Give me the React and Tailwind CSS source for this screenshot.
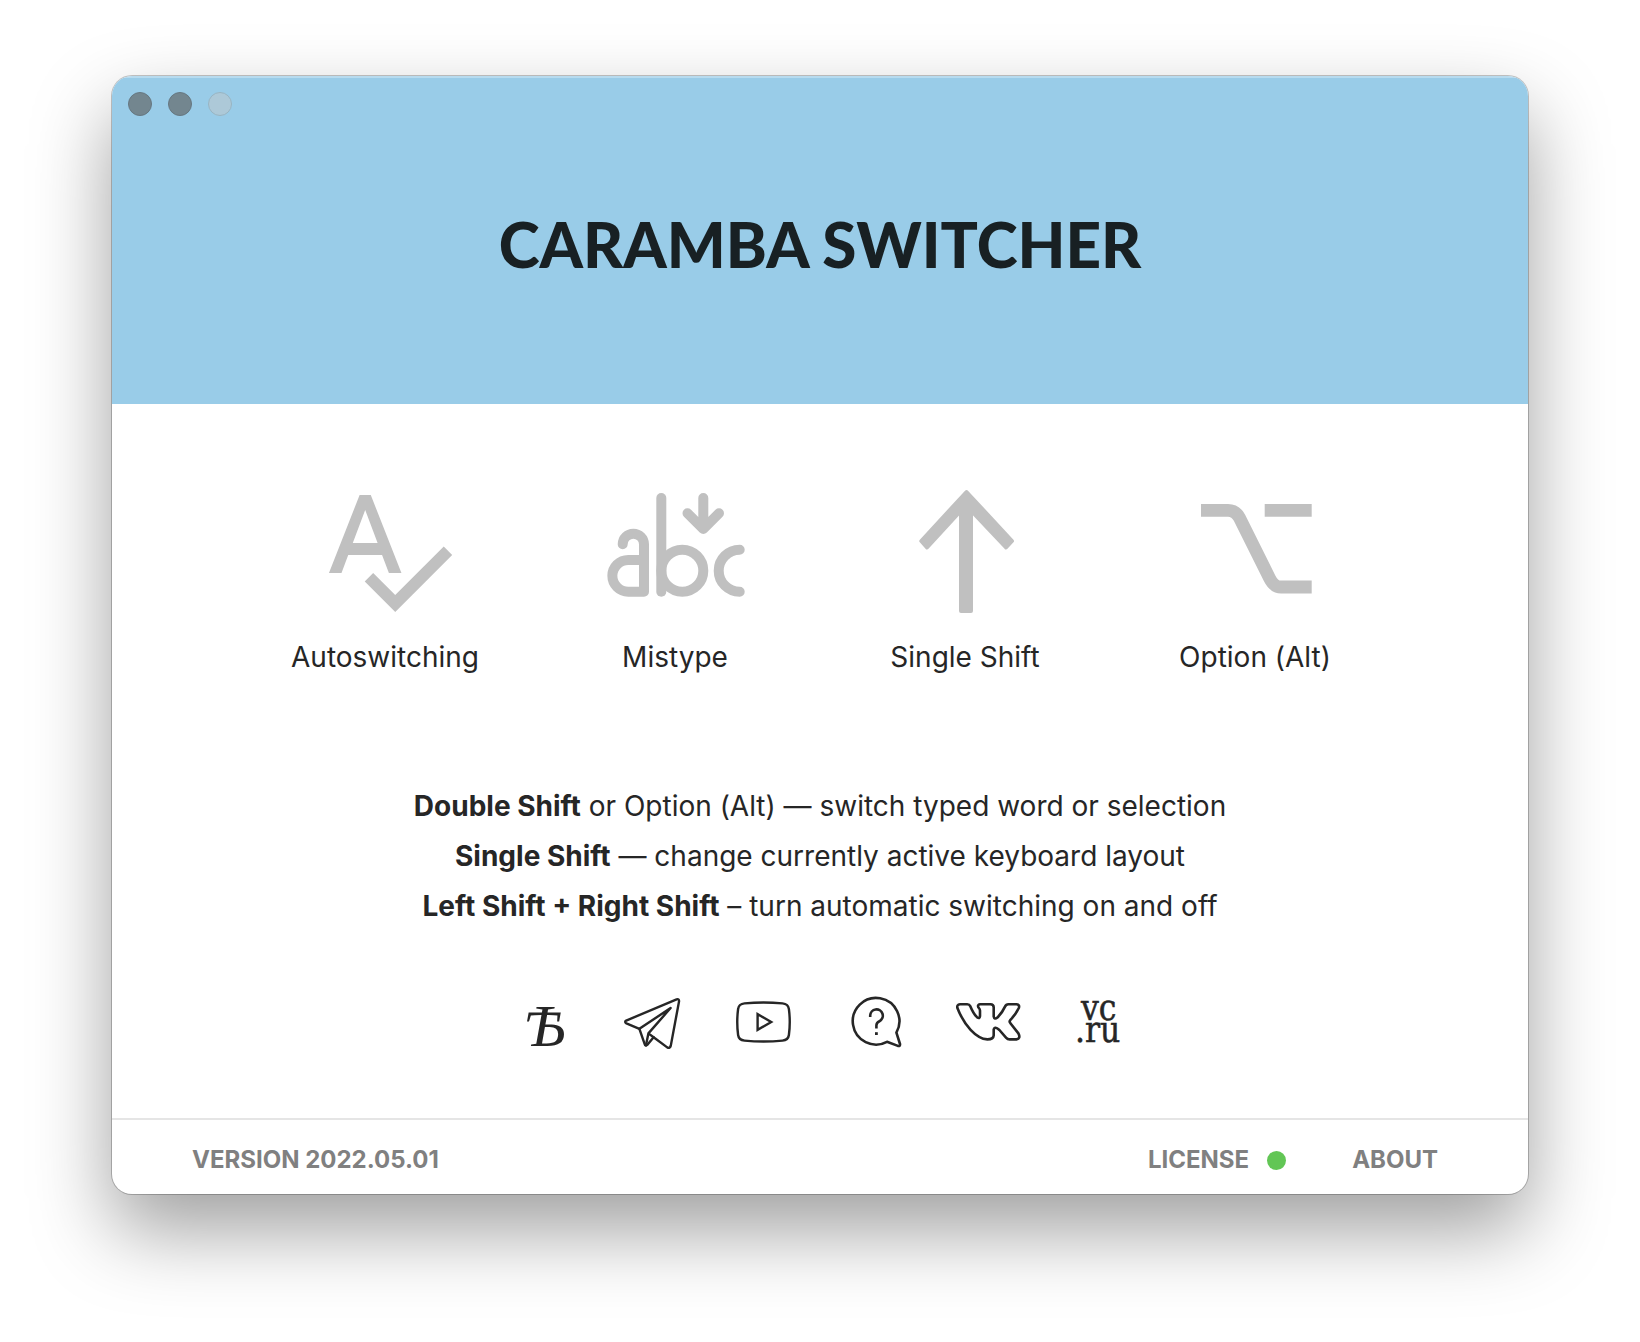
import React from "react";

const iconClass = "size-36 text-[#c0c0c0]";

function SpellcheckIcon() {
  return (
    <svg viewBox="-0.2 0 24 24" className={iconClass} fill="currentColor" aria-hidden="true">
      <path d="M12.45 16h2.09L9.43 3H7.57L2.46 16h2.09l1.12-3h5.64l1.14 3zm-6.02-5L8.5 5.48 10.57 11H6.43zm15.16.59l-8.09 8.09L9.83 16l-1.41 1.41 5.09 5.09L23 13l-1.41-1.41z" />
    </svg>
  );
}

function MistypeIcon() {
  return (
    <svg viewBox="0 0 144 144" className={iconClass} fill="none" stroke="currentColor" strokeWidth="10" strokeLinecap="round" strokeLinejoin="round" aria-hidden="true">
      <path d="M19.7 67.3A10.65 10.65 0 0 1 41 67.3V114.7H25.2A15.85 15.85 0 0 1 25.2 83H41" />
      <path d="M58.3 21V114.7" />
      <circle cx="79.3" cy="93.7" r="21" />
      <path d="M136.7 72.7A21 21 0 0 0 136.7 114.7" />
      <path d="M100.3 21V51M84.5 36.3L100.3 52L116 36.3" />
    </svg>
  );
}

function ShiftIcon() {
  return (
    <svg viewBox="0 0 144 144" className={iconClass} fill="currentColor" stroke="currentColor" strokeWidth="4" strokeLinejoin="round" aria-hidden="true">
      <path d="M73.5 15L119 64L113 70.5L78 33.5V134H68V33.5L34 70.5L28.3 64Z" />
    </svg>
  );
}

function OptionIcon() {
  return (
    <svg viewBox="0 0 144 144" className={iconClass} fill="none" stroke="currentColor" strokeWidth="12.8" aria-hidden="true">
      <path d="M18 33.3H45Q52.5 33.3 56.3 40.5L86.7 101.5Q91 110 98 110H128.7" />
      <path d="M81.7 33.3H128.7" />
    </svg>
  );
}

const socialClass = "size-16 overflow-visible";

function YatLogo() {
  return (
    <svg viewBox="0 0 64 64" className={socialClass} fill="currentColor" aria-hidden="true">
      <text x="14" y="56" fontSize="60" fontStyle="italic" fontFamily="'Liberation Serif', serif">Ѣ</text>
    </svg>
  );
}

function TelegramIcon() {
  return (
    <svg viewBox="0 0 64 64" className={socialClass} fill="none" stroke="currentColor" strokeWidth="2.4" strokeLinejoin="round" strokeLinecap="round" aria-hidden="true">
      <path d="M4.2 30.6L54.6 9.3Q57.4 8.6 57 11.6L48.8 55.6Q48 58.8 45.2 57.4L31.6 47.2L25.6 54.6Q23.4 56.6 22.6 53.8L17.4 38.8L4.4 33.4Q2 32 4.2 30.6Z" />
      <path d="M17.4 38.8L48.6 18L26.4 43.4L23.9 55.4M26.4 43.4L31.6 47.2" />
    </svg>
  );
}

function YouTubeIcon() {
  return (
    <svg viewBox="0 0 64 64" className={socialClass} fill="none" stroke="currentColor" strokeWidth="2.4" aria-hidden="true">
      <path d="M11.5 13.4Q30.5 11.6 49.5 13.4Q55.2 13.9 55.9 19Q57.6 32 55.9 45Q55.2 50.1 49.5 50.6Q30.5 52.4 11.5 50.6Q5.8 50.1 5.1 45Q3.4 32 5.1 19Q5.8 13.9 11.5 13.4Z" />
      <path d="M24.6 24.1V39.9L38.2 32Z" />
    </svg>
  );
}

function QuestionIcon() {
  return (
    <svg viewBox="0 0 64 64" className={socialClass} fill="none" stroke="currentColor" strokeWidth="2.6" strokeLinejoin="round" aria-hidden="true">
      <path d="M43 51.8A23.3 23.3 0 1 1 52.4 42.6L56 54Q56.3 56.4 53.9 55.9Z" />
      <path d="M26.2 27V25.6A6.3 6.3 0 1 1 35.4 31.3Q32.4 32.6 32.4 35.6V38.6" />
      <path d="M31 43.6H33.8" strokeWidth="2.8" />
    </svg>
  );
}

function VkIcon() {
  return (
    <svg viewBox="0 0 64 64" className={socialClass} fill="none" stroke="currentColor" strokeWidth="2.6" strokeLinejoin="round" aria-hidden="true">
      <path d="M5 14.3H12.2Q14.4 14.3 15.4 16.4Q18.4 23.6 22 27.2Q24.8 29.4 25 26V20.6Q24.9 18.8 23.4 17.4Q22.2 14.7 25 14.3H35.4Q38.7 14.3 38.7 17.6V26.4Q39.4 30 42.4 27.6Q47.4 22.4 50 16.6Q51 14.3 53.4 14.3H61.6Q65 14.8 63.8 18Q61 23.8 55.2 30.2Q54 31.7 55.4 33.2L63.4 43.4Q66 48.6 61.4 49.4H54.6Q52.6 49.4 51 47.6L44.4 40Q39.6 35.6 38.7 39.6V45.4Q38.4 49.4 32.4 49.4C21 48.6 9 35 2.4 18Q1.6 14.6 5 14.3Z" />
    </svg>
  );
}

function VcLogo() {
  return (
    <svg viewBox="0 0 64 64" className={socialClass} fill="currentColor" stroke="currentColor" strokeWidth="0.5" fontSize="35" fontFamily="'DejaVu Serif Condensed', 'DejaVu Serif', serif" aria-hidden="true">
      <text>
        <tspan x="15" y="30">vc</tspan>
        <tspan x="9" y="52">.ru</tspan>
      </text>
    </svg>
  );
}

const features = [
  { label: "Autoswitching", Icon: SpellcheckIcon },
  { label: "Mistype", Icon: MistypeIcon },
  { label: "Single Shift", Icon: ShiftIcon },
  { label: "Option (Alt)", Icon: OptionIcon },
];

const hints = [
  { keys: "Double Shift", text: "or Option (Alt) — switch typed word or selection" },
  { keys: "Single Shift", text: "— change currently active keyboard layout" },
  { keys: "Left Shift + Right Shift", text: "– turn automatic switching on and off" },
];

const links = [
  { name: "Blog", Icon: YatLogo },
  { name: "Telegram", Icon: TelegramIcon },
  { name: "YouTube", Icon: YouTubeIcon },
  { name: "Help", Icon: QuestionIcon },
  { name: "VK", Icon: VkIcon },
  { name: "vc.ru", Icon: VcLogo },
];

export default function App() {
  return (
    <div className="min-h-screen bg-white px-28 pt-[76px] pb-36 font-[Inter,sans-serif] text-[#262626]">
      <main className="overflow-hidden rounded-[20px] bg-white shadow-[0_0_0_1px_rgba(0,0,0,0.22),0_36px_80px_rgba(0,0,0,0.38)]">
        <header className="bg-[#99cce8] px-4 pt-4 pb-32 shadow-[inset_0_2px_0_rgba(255,255,255,0.3)]">
          <div className="flex gap-4">
            <button aria-label="Close" className="size-6 rounded-full border border-[#667780] bg-[#73868f]" />
            <button aria-label="Minimize" className="size-6 rounded-full border border-[#667780] bg-[#73868f]" />
            <button aria-label="Zoom" disabled className="size-6 rounded-full border border-[#98b4c2] bg-[#adc9d8]" />
          </div>
          <h1 className="mt-24 text-center font-[Lato,sans-serif] text-[62px] leading-16 font-black text-[#182023]">
            CARAMBA SWITCHER
          </h1>
        </header>

        <section className="mx-auto grid max-w-[1160px] grid-cols-4 pt-[73px]">
          {features.map(({ label, Icon }) => (
            <button key={label} className="flex flex-col items-center text-[28px] leading-10">
              <Icon />
              <span className="mt-4">{label}</span>
            </button>
          ))}
        </section>

        <section className="mt-[104px] text-center text-[28px] leading-[50px]">
          {hints.map(({ keys, text }) => (
            <p key={keys}>
              <b className="font-bold">{keys}</b> {text}
            </p>
          ))}
        </section>

        <nav className="mt-[59px] flex justify-center gap-[47px]">
          {links.map(({ name, Icon }) => (
            <a key={name} href="#" aria-label={name}>
              <Icon />
            </a>
          ))}
        </nav>

        <footer className="mt-16 flex items-center border-t-2 border-[#e5e5e5] px-20 pt-[23px] pb-[17px] text-2xl leading-[34px] font-bold text-[#808080]">
          <span>VERSION 2022.05.01</span>
          <button className="ml-auto flex items-center gap-[18px]">
            LICENSE
            <span className="size-[19px] rounded-full bg-[#62c655]" />
          </button>
          <button className="mr-[10px] ml-[66px]">ABOUT</button>
        </footer>
      </main>
    </div>
  );
}
